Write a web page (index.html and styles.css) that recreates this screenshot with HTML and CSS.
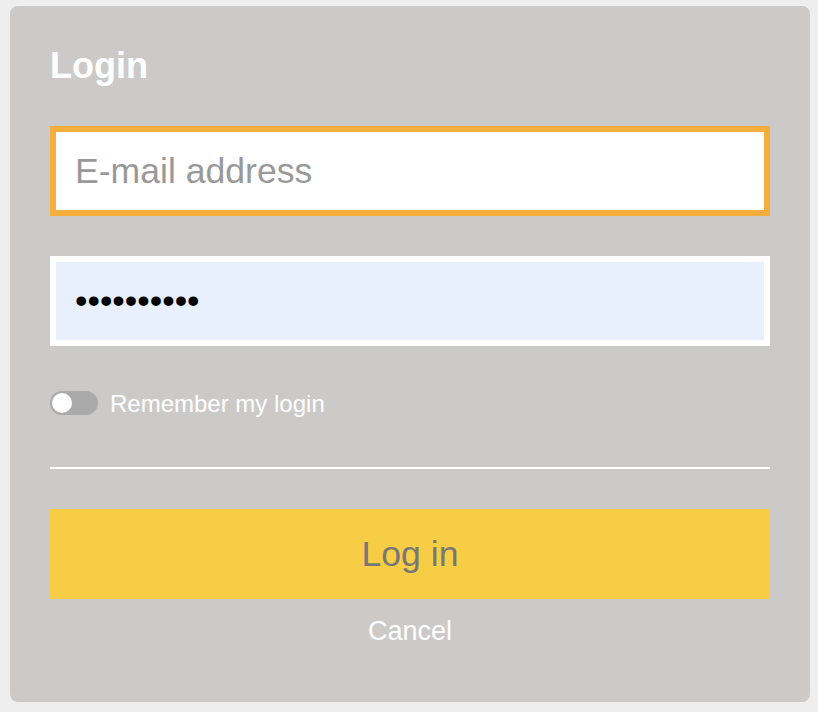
FILE: index.html
```html
<!DOCTYPE html>
<html lang="en">

<head>
    <meta charset="UTF-8">
    <meta name="viewport" content="width=device-width, initial-scale=1.0">
    <title>Login</title>
    <link rel="stylesheet" href="styles.css">
</head>

<body>
    <div class="login-card">
        <h1>Login</h1>
        <form class="login-form" onsubmit="return false">
            <input type="email" class="field field-email" placeholder="E-mail address">
            <input type="password" class="field field-password" value="secretpass">

            <label class="remember">
                <span class="switch"><span class="knob"></span></span>
                <span class="remember-text">Remember my login</span>
            </label>

            <div class="divider"></div>

            <button type="submit" class="btn-login">Log in</button>
            <a href="#" class="cancel">Cancel</a>
        </form>
    </div>
</body>

</html>
```

FILE: styles.css
```css
body {
    margin: 0;
    padding: 6px 8px 10px 10px;
    background-color: #eeeeee;
    font-family: "Liberation Sans", Arial, sans-serif;
}

.login-card {
    width: 800px;
    height: 696px;
    box-sizing: border-box;
    padding: 40px;
    background: #cccac9;
    border-radius: 8px;
}

h1 {
    margin: 0 0 40px 0;
    font-size: 36px;
    line-height: 40px;
    font-weight: bold;
    color: #ffffff;
}

.login-form {
    display: flex;
    flex-direction: column;
}

.field {
    height: 90px;
    box-sizing: border-box;
    padding: 0 19px;
    font-family: inherit;
    font-size: 35.6px;
    color: #000000;
    outline: none;
    border-radius: 0;
}

.field::placeholder {
    color: #999999;
}

.field-email {
    border: 6px solid #f5ae3c;
    background: #ffffff;
    margin-bottom: 40px;
}

.field-password {
    border: 6px solid #ffffff;
    background: #e8f0fe;
}

.remember {
    display: flex;
    align-items: center;
    gap: 12px;
    margin-top: 45px;
    height: 24px;
    cursor: pointer;
}

.switch {
    width: 48px;
    height: 24px;
    border-radius: 12px;
    background: #aaaaaa;
    display: flex;
    align-items: center;
    padding: 0 2px;
    box-sizing: border-box;
}

.knob {
    width: 20px;
    height: 20px;
    border-radius: 50%;
    background: #ffffff;
}

.remember-text {
    color: #ffffff;
    font-size: 24px;
    padding-top: 2px;
}

.divider {
    height: 2px;
    background: #ffffff;
    margin-top: 52px;
}

.btn-login {
    margin-top: 40px;
    height: 90px;
    border: none;
    border-radius: 0;
    background: #f7cd45;
    color: #777777;
    font-family: inherit;
    font-size: 35.6px;
    cursor: pointer;
}

.cancel {
    margin-top: 17px;
    align-self: center;
    color: #ffffff;
    font-size: 27px;
    text-decoration: none;
}
```
